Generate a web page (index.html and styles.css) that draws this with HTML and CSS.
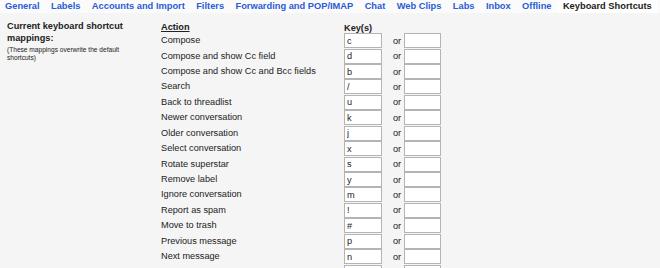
FILE: index.html
```
<!DOCTYPE html>
<html lang="en">
<head>
    <meta charset="UTF-8">
    <title>Settings - Keyboard Shortcuts</title>
    <link rel="stylesheet" href="styles.css">
</head>
<body>
    <div class="tabs">
        <a class="tab" href="#">General</a>
        <a class="tab" href="#">Labels</a>
        <a class="tab" href="#">Accounts and Import</a>
        <a class="tab" href="#">Filters</a>
        <a class="tab" href="#">Forwarding and POP/IMAP</a>
        <a class="tab" href="#">Chat</a>
        <a class="tab" href="#">Web Clips</a>
        <a class="tab" href="#">Labs</a>
        <a class="tab" href="#">Inbox</a>
        <a class="tab" href="#">Offline</a>
        <span class="tab selected">Keyboard Shortcuts</span>
    </div>

    <div class="settings">
        <div class="intro">
            <h3>Current keyboard shortcut mappings:</h3>
            <p>(These mappings overwrite the default shortcuts)</p>
        </div>

        <div class="mappings">
            <div class="row head">
                <span class="action"><u>Action</u></span>
                <span class="keys">Key(s)</span>
            </div>
            <div class="row"><span class="action">Compose</span><input class="key" value="c"><span class="or">or</span><input class="key alt"></div>
            <div class="row"><span class="action">Compose and show Cc field</span><input class="key" value="d"><span class="or">or</span><input class="key alt"></div>
            <div class="row"><span class="action">Compose and show Cc and Bcc fields</span><input class="key" value="b"><span class="or">or</span><input class="key alt"></div>
            <div class="row"><span class="action">Search</span><input class="key" value="/"><span class="or">or</span><input class="key alt"></div>
            <div class="row"><span class="action">Back to threadlist</span><input class="key" value="u"><span class="or">or</span><input class="key alt"></div>
            <div class="row"><span class="action">Newer conversation</span><input class="key" value="k"><span class="or">or</span><input class="key alt"></div>
            <div class="row"><span class="action">Older conversation</span><input class="key" value="j"><span class="or">or</span><input class="key alt"></div>
            <div class="row"><span class="action">Select conversation</span><input class="key" value="x"><span class="or">or</span><input class="key alt"></div>
            <div class="row"><span class="action">Rotate superstar</span><input class="key" value="s"><span class="or">or</span><input class="key alt"></div>
            <div class="row"><span class="action">Remove label</span><input class="key" value="y"><span class="or">or</span><input class="key alt"></div>
            <div class="row"><span class="action">Ignore conversation</span><input class="key" value="m"><span class="or">or</span><input class="key alt"></div>
            <div class="row"><span class="action">Report as spam</span><input class="key" value="!"><span class="or">or</span><input class="key alt"></div>
            <div class="row"><span class="action">Move to trash</span><input class="key" value="#"><span class="or">or</span><input class="key alt"></div>
            <div class="row"><span class="action">Previous message</span><input class="key" value="p"><span class="or">or</span><input class="key alt"></div>
            <div class="row"><span class="action">Next message</span><input class="key" value="n"><span class="or">or</span><input class="key alt"></div>
            <div class="row"><span class="action"></span><input class="key"><span class="or"></span><input class="key alt"></div>
        </div>
    </div>
</body>
</html>
```

FILE: styles.css
```
body {
    font-family: "Liberation Sans", Arial, sans-serif;
    margin: 0;
    padding: 0;
    background-color: #f5f5f5;
    color: #222;
    overflow: hidden;
}

.tabs {
    display: flex;
    height: 13px;
    background-color: #fbfbfb;
}

.tab {
    padding: 0 5.7px;
    font-size: 9.3px;
    font-weight: bold;
    line-height: 13px;
    color: #2a5cd6;
    text-decoration: none;
    white-space: nowrap;
}

.tab:first-child {
    padding-left: 5px;
}

.tab.selected {
    color: #222;
    background-color: #fff;
}

.settings {
    display: flex;
    padding-top: 7px;
}

.intro {
    width: 154px;
    padding-left: 7px;
}

.intro h3 {
    margin: 0;
    width: 125px;
    font-size: 9.2px;
    line-height: 12px;
}

.intro p {
    margin: 2px 0 0;
    width: 120px;
    font-size: 6.6px;
    line-height: 8px;
}

.row {
    display: flex;
    align-items: center;
    height: 15.43px;
    font-size: 9.2px;
}

.row.head {
    height: 13px;
    align-items: flex-end;
    font-weight: bold;
}

.action {
    width: 183px;
    line-height: 11px;
}

.key {
    box-sizing: border-box;
    width: 38px;
    height: 15px;
    margin: 0;
    padding: 0 2px;
    border: 1px solid #b4b4b4;
    background-color: #fff;
    font-family: inherit;
    font-size: 9.2px;
    color: #222;
}

.or {
    width: 22px;
    padding-left: 11px;
    box-sizing: border-box;
}

.key.alt {
    width: 37px;
}
```
